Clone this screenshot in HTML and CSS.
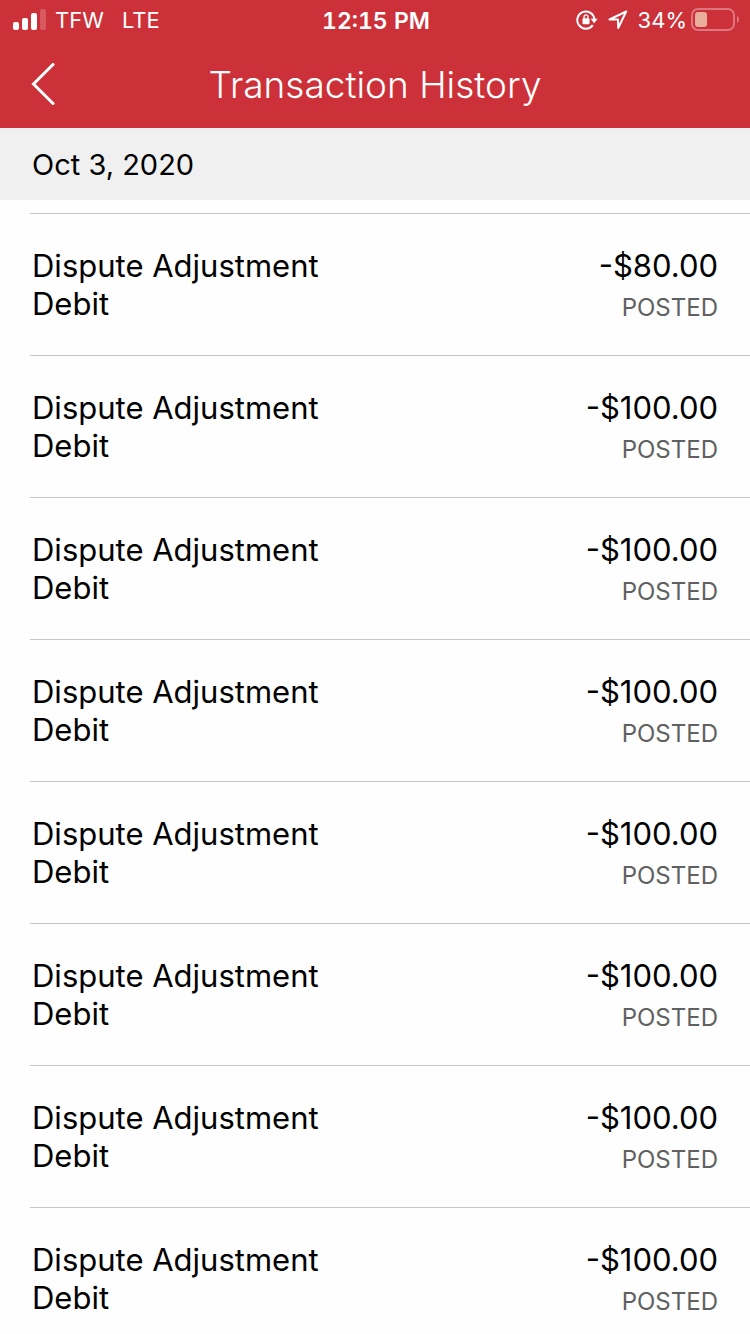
FILE: index.html
```html
<!DOCTYPE html>
<html lang="en">
<head>
    <meta charset="UTF-8">
    <meta name="viewport" content="width=device-width, initial-scale=1.0">
    <title>Transaction History</title>
    <link rel="stylesheet" href="styles.css">
</head>
<body>
    <header>
        <div class="status-bar">
            <div class="status-left">
                <svg class="signal" width="34" height="22" viewBox="0 0 34 22" fill="#fff" aria-hidden="true">
                    <rect x="0" y="13" width="6" height="8" rx="2"/>
                    <rect x="9" y="9" width="6" height="12" rx="2"/>
                    <rect x="18" y="4" width="6" height="17" rx="2"/>
                    <rect x="27" y="0" width="6" height="21" rx="2" opacity="0.2"/>
                </svg>
                <span>TFW</span>
                <span>LTE</span>
            </div>
            <div class="status-time">12:15 PM</div>
            <div class="status-right">
                <svg width="22" height="20" viewBox="0 0 22 20" fill="none" aria-hidden="true">
                    <path d="M16.800 15.200A8.600 8.600 0 1 1 18.400 9" stroke="#fff" stroke-width="2"/>
                    <path d="M14.600 8.800h7l-3.500 4.400z" fill="#fff"/>
                    <rect x="6.500" y="8.300" width="7" height="6" rx="1" fill="#fff"/>
                    <path d="M8.100 8.500V6.800a1.900 1.900 0 0 1 3.800 0v1.700" stroke="#fff" stroke-width="1.400"/>
                </svg>
                <svg width="20" height="20" viewBox="0 0 20 20" fill="none" aria-hidden="true">
                    <path d="M18.200 1.500L1.500 9.500h8.500l.2 8.500z" stroke="#fff" stroke-width="2" stroke-linejoin="round"/>
                </svg>
                <span>34%</span>
                <svg class="battery" width="48" height="24" viewBox="0 0 48 24" fill="none" aria-hidden="true">
                    <rect x="1" y="1" width="42" height="21" rx="6" stroke="#de7680" stroke-width="2"/>
                    <rect x="4" y="4" width="12" height="15" rx="3" fill="#e9ad9b"/>
                    <path d="M46 8c2.600 1 2.600 6 0 7z" fill="#de7680"/>
                </svg>
            </div>
        </div>
        <nav>
            <button class="back" type="button" aria-label="Back">
                <svg width="24" height="42" viewBox="0 0 24 42" fill="none" aria-hidden="true">
                    <path d="M22 1.500L2.500 21L22 40.500" stroke="#fff" stroke-width="3" stroke-linecap="round"/>
                </svg>
            </button>
            <h1>Transaction History</h1>
        </nav>
    </header>

    <main>
        <h2>Oct 3, 2020</h2>
        <ul class="transactions">
            <li>
                <p class="name">Dispute Adjustment Debit</p>
                <div class="sum"><p class="amount">-$80.00</p><p class="state">POSTED</p></div>
            </li>
            <li>
                <p class="name">Dispute Adjustment Debit</p>
                <div class="sum"><p class="amount">-$100.00</p><p class="state">POSTED</p></div>
            </li>
            <li>
                <p class="name">Dispute Adjustment Debit</p>
                <div class="sum"><p class="amount">-$100.00</p><p class="state">POSTED</p></div>
            </li>
            <li>
                <p class="name">Dispute Adjustment Debit</p>
                <div class="sum"><p class="amount">-$100.00</p><p class="state">POSTED</p></div>
            </li>
            <li>
                <p class="name">Dispute Adjustment Debit</p>
                <div class="sum"><p class="amount">-$100.00</p><p class="state">POSTED</p></div>
            </li>
            <li>
                <p class="name">Dispute Adjustment Debit</p>
                <div class="sum"><p class="amount">-$100.00</p><p class="state">POSTED</p></div>
            </li>
            <li>
                <p class="name">Dispute Adjustment Debit</p>
                <div class="sum"><p class="amount">-$100.00</p><p class="state">POSTED</p></div>
            </li>
            <li>
                <p class="name">Dispute Adjustment Debit</p>
                <div class="sum"><p class="amount">-$100.00</p><p class="state">POSTED</p></div>
            </li>
        </ul>
    </main>
</body>
</html>
```
FILE: styles.css
```css
* {
    box-sizing: border-box;
}

body {
    display: flex;
    flex-direction: column;
    height: 100vh;
    margin: 0;
    font-family: Inter, "Liberation Sans", sans-serif;
    font-size: 31px;
    line-height: 38px;
    color: #000;
    background-color: #fdfefd;
}

h1, h2, p, ul {
    margin: 0;
    padding: 0;
    font-weight: 400;
}

header {
    flex: none;
    color: #fff;
    background-color: #cc3139;
}

.status-bar {
    display: grid;
    grid-template-columns: 1fr auto 1fr;
    align-items: center;
    height: 40px;
    padding: 0 11px 0 13px;
    font-size: 22px;
}

.status-left, .status-right {
    display: flex;
    align-items: center;
}

.status-left {
    gap: 18px;
}

.signal {
    margin-right: -10px;
}

.status-time {
    padding-top: 2px;
    font-size: 23px;
    font-weight: 600;
    font-variant-numeric: tabular-nums;
}

.status-right {
    justify-content: flex-end;
    gap: 10px;
}

.battery {
    margin-left: -6px;
}

nav {
    display: grid;
    grid-template-columns: 64px 1fr 64px;
    align-items: center;
    height: 88px;
}

.back {
    display: flex;
    padding: 0 0 0 31px;
    border: none;
    background: none;
    cursor: pointer;
}

h1 {
    padding-top: 2px;
    font-size: 37px;
    font-weight: 300;
    text-align: center;
}

/* Список прокручивается под шапкой */
main {
    flex: 1;
    min-height: 0;
    overflow-y: auto;
    scrollbar-width: none;
}

h2 {
    padding: 18px 32px 16px;
    font-size: 29px;
    background-color: #f0f0f0;
}

.transactions {
    margin: 13px 0 0 30px;
    list-style: none;
}

.transactions li {
    display: flex;
    justify-content: space-between;
    padding: 33px 32px 32px 2px;
    border-top: 1px solid #c6c8c7;
}

.name {
    width: 50%;
}

.sum {
    text-align: right;
}

.state {
    margin-top: 9px;
    font-size: 24px;
    line-height: 28px;
    color: #606060;
}
```
